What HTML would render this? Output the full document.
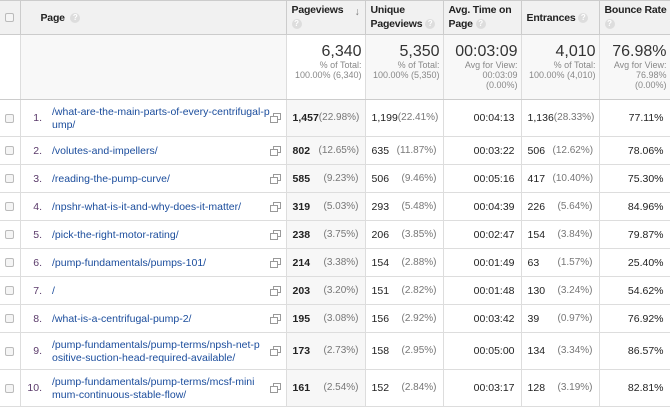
<!DOCTYPE html>
<html><head><meta charset="utf-8"><style>
*{box-sizing:border-box;margin:0;padding:0}
body{width:670px;height:407px;overflow:hidden;background:#fff;font-family:"Liberation Sans",Arial,sans-serif;font-size:11px;color:#222}
table{border-collapse:collapse;table-layout:fixed;width:670px}
td,th{border:1px solid #ddd;vertical-align:middle;white-space:nowrap;overflow:hidden}
tr td:first-child,tr th:first-child{border-left:none}
th{background:#f1f1f1;font-weight:bold;text-align:left;font-size:10.5px;color:#222;height:34px;padding:0 5px;line-height:14px;vertical-align:top;padding-top:2px;border-color:#ccc;border-bottom:1px solid #ccc;letter-spacing:-0.2px}
.q{display:inline-block;width:10px;height:10px;border-radius:50%;background:#ddd;color:#fff;font-size:8px;text-align:center;line-height:10px;vertical-align:middle;font-weight:bold}
.cb{width:9px;height:9px;border:1px solid #bbb;border-radius:2px;background:#f5f5f5;display:inline-block;margin-left:5px;vertical-align:middle}
.sum td{height:65px;background:#f8f8f8;text-align:right;padding:0 3px;vertical-align:top;padding-top:8px;border-bottom:1px solid #ccc}
.sum td.pv{background:#fff}
.big{font-size:16px;color:#333;line-height:17px}
.sm{font-size:9px;color:#888;line-height:10px}
.r td{height:28px;padding:0 6px;font-size:10.5px}
.r.t td{height:37px}
.r td.pv{background:#f7f7f7}
td.num{color:#5a3a6a;text-align:right;padding-right:8px;border-right:none}
td.lnk{color:#1a4c9c;line-height:13px;position:relative;padding-left:2px;padding-right:18px;border-left:none;letter-spacing:0;padding-top:1px}
.ic{position:absolute;right:6px;top:50%;margin-top:-5px;width:10px;height:9px}
.ic:before{content:"";position:absolute;left:3px;top:0;width:6px;height:5px;border:1px solid #999}
.ic:after{content:"";position:absolute;left:0;top:3px;width:6px;height:5px;border:1px solid #999;background:#fff}
.v{display:flex;justify-content:space-between}
.p{color:#777;width:40px;text-align:right;font-size:10px}
.b{font-weight:bold}
.rt{text-align:right}
</style></head><body>
<table>
<colgroup><col style="width:20px"><col style="width:30px"><col style="width:236px"><col style="width:79px"><col style="width:78px"><col style="width:78px"><col style="width:78px"><col style="width:71px"></colgroup>
<tr><th style="vertical-align:middle;padding:0"><span class="cb"></span></th><th colspan="2" style="padding-left:20px;vertical-align:middle;padding-top:0">Page &nbsp;<span class="q">?</span></th>
<th style="position:relative">Pageviews<br><span class="q">?</span><span style="position:absolute;right:5px;top:4px;color:#777">&#8595;</span></th>
<th>Unique<br>Pageviews <span class="q">?</span></th>
<th>Avg. Time on<br>Page <span class="q">?</span></th>
<th style="vertical-align:middle;padding-top:0">Entrances <span class="q">?</span></th>
<th>Bounce Rate<br><span class="q">?</span></th></tr>
<tr class="sum"><td style="background:#fff"></td><td colspan="2" style="background:#f8f8f8"></td>
<td class="pv"><div class="big">6,340</div><div class="sm">% of Total:<br>100.00% (6,340)</div></td>
<td><div class="big">5,350</div><div class="sm">% of Total:<br>100.00% (5,350)</div></td>
<td><div class="big">00:03:09</div><div class="sm">Avg for View:<br>00:03:09<br>(0.00%)</div></td>
<td><div class="big">4,010</div><div class="sm">% of Total:<br>100.00% (4,010)</div></td>
<td><div class="big">76.98%</div><div class="sm">Avg for View:<br>76.98%<br>(0.00%)</div></td></tr>

<tr class="r t"><td style="padding:0"><span class="cb"></span></td><td class="num">1.</td><td class="lnk">/what-are-the-main-parts-of-every-centrifugal-p<br>ump/<span class="ic"></span></td><td class="pv"><div class="v"><span class="b">1,457</span><span class="p">(22.98%)</span></div></td><td><div class="v"><span>1,199</span><span class="p">(22.41%)</span></div></td><td class="rt">00:04:13</td><td><div class="v"><span>1,136</span><span class="p">(28.33%)</span></div></td><td class="rt">77.11%</td></tr>
<tr class="r"><td style="padding:0"><span class="cb"></span></td><td class="num">2.</td><td class="lnk">/volutes-and-impellers/<span class="ic"></span></td><td class="pv"><div class="v"><span class="b">802</span><span class="p">(12.65%)</span></div></td><td><div class="v"><span>635</span><span class="p">(11.87%)</span></div></td><td class="rt">00:03:22</td><td><div class="v"><span>506</span><span class="p">(12.62%)</span></div></td><td class="rt">78.06%</td></tr>
<tr class="r"><td style="padding:0"><span class="cb"></span></td><td class="num">3.</td><td class="lnk">/reading-the-pump-curve/<span class="ic"></span></td><td class="pv"><div class="v"><span class="b">585</span><span class="p">(9.23%)</span></div></td><td><div class="v"><span>506</span><span class="p">(9.46%)</span></div></td><td class="rt">00:05:16</td><td><div class="v"><span>417</span><span class="p">(10.40%)</span></div></td><td class="rt">75.30%</td></tr>
<tr class="r"><td style="padding:0"><span class="cb"></span></td><td class="num">4.</td><td class="lnk">/npshr-what-is-it-and-why-does-it-matter/<span class="ic"></span></td><td class="pv"><div class="v"><span class="b">319</span><span class="p">(5.03%)</span></div></td><td><div class="v"><span>293</span><span class="p">(5.48%)</span></div></td><td class="rt">00:04:39</td><td><div class="v"><span>226</span><span class="p">(5.64%)</span></div></td><td class="rt">84.96%</td></tr>
<tr class="r"><td style="padding:0"><span class="cb"></span></td><td class="num">5.</td><td class="lnk">/pick-the-right-motor-rating/<span class="ic"></span></td><td class="pv"><div class="v"><span class="b">238</span><span class="p">(3.75%)</span></div></td><td><div class="v"><span>206</span><span class="p">(3.85%)</span></div></td><td class="rt">00:02:47</td><td><div class="v"><span>154</span><span class="p">(3.84%)</span></div></td><td class="rt">79.87%</td></tr>
<tr class="r"><td style="padding:0"><span class="cb"></span></td><td class="num">6.</td><td class="lnk">/pump-fundamentals/pumps-101/<span class="ic"></span></td><td class="pv"><div class="v"><span class="b">214</span><span class="p">(3.38%)</span></div></td><td><div class="v"><span>154</span><span class="p">(2.88%)</span></div></td><td class="rt">00:01:49</td><td><div class="v"><span>63</span><span class="p">(1.57%)</span></div></td><td class="rt">25.40%</td></tr>
<tr class="r"><td style="padding:0"><span class="cb"></span></td><td class="num">7.</td><td class="lnk">/<span class="ic"></span></td><td class="pv"><div class="v"><span class="b">203</span><span class="p">(3.20%)</span></div></td><td><div class="v"><span>151</span><span class="p">(2.82%)</span></div></td><td class="rt">00:01:48</td><td><div class="v"><span>130</span><span class="p">(3.24%)</span></div></td><td class="rt">54.62%</td></tr>
<tr class="r"><td style="padding:0"><span class="cb"></span></td><td class="num">8.</td><td class="lnk">/what-is-a-centrifugal-pump-2/<span class="ic"></span></td><td class="pv"><div class="v"><span class="b">195</span><span class="p">(3.08%)</span></div></td><td><div class="v"><span>156</span><span class="p">(2.92%)</span></div></td><td class="rt">00:03:42</td><td><div class="v"><span>39</span><span class="p">(0.97%)</span></div></td><td class="rt">76.92%</td></tr>
<tr class="r t"><td style="padding:0"><span class="cb"></span></td><td class="num">9.</td><td class="lnk">/pump-fundamentals/pump-terms/npsh-net-p<br>ositive-suction-head-required-available/<span class="ic"></span></td><td class="pv"><div class="v"><span class="b">173</span><span class="p">(2.73%)</span></div></td><td><div class="v"><span>158</span><span class="p">(2.95%)</span></div></td><td class="rt">00:05:00</td><td><div class="v"><span>134</span><span class="p">(3.34%)</span></div></td><td class="rt">86.57%</td></tr>
<tr class="r t"><td style="padding:0"><span class="cb"></span></td><td class="num">10.</td><td class="lnk">/pump-fundamentals/pump-terms/mcsf-mini<br>mum-continuous-stable-flow/<span class="ic"></span></td><td class="pv"><div class="v"><span class="b">161</span><span class="p">(2.54%)</span></div></td><td><div class="v"><span>152</span><span class="p">(2.84%)</span></div></td><td class="rt">00:03:17</td><td><div class="v"><span>128</span><span class="p">(3.19%)</span></div></td><td class="rt">82.81%</td></tr>
</table>
</body></html>
